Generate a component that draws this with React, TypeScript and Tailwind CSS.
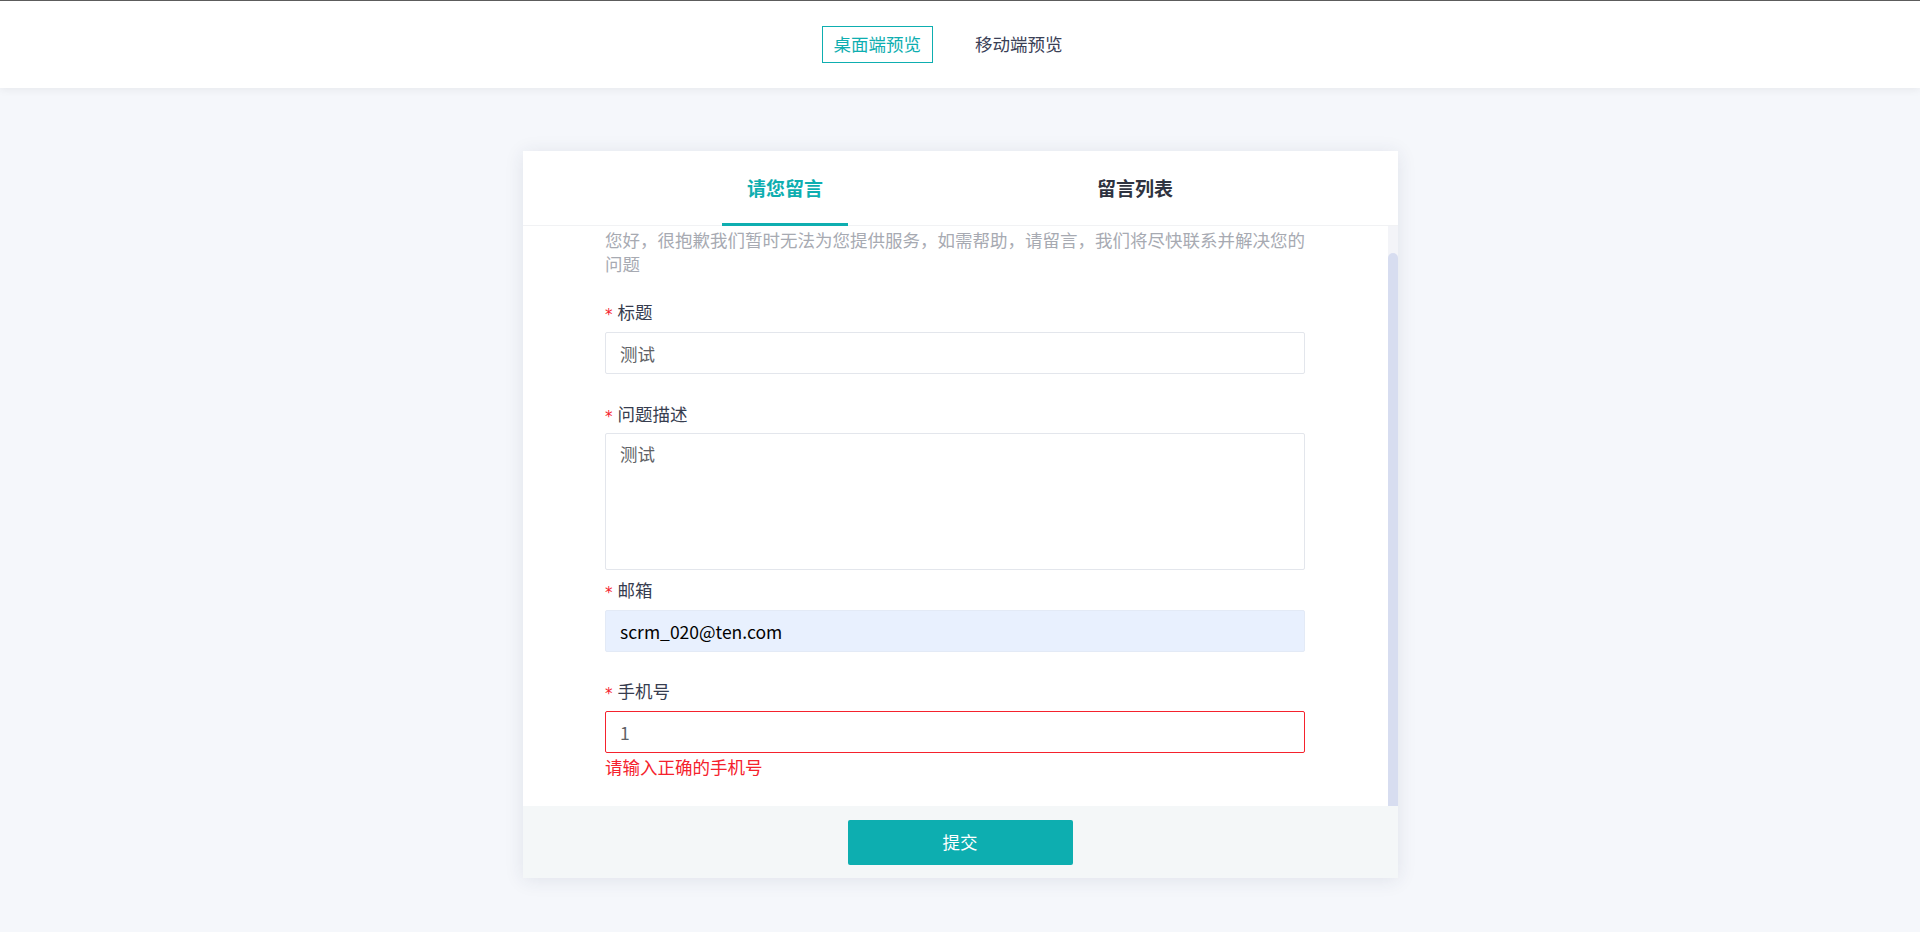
import { useState } from "react";

const fields = [
  { key: "title", label: "标题", value: "测试" },
  { key: "email", label: "邮箱", value: "scrm_020@ten.com" },
  { key: "phone", label: "手机号", value: "1" },
];

function Label({ text }: { text: string }) {
  return (
    <div className="flex items-center h-[24px] text-[17.5px] leading-[24px] text-[#373d4f]">
      <span className="text-[#f5222d] text-[15px] mr-[5px] leading-none translate-y-[3px] font-['DejaVu_Sans',sans-serif]">*</span>
      {text}
    </div>
  );
}

export default function App() {
  const [mode, setMode] = useState("desktop");
  const [tab, setTab] = useState(0);

  return (
    <div className="min-h-screen bg-[#f5f7fb] font-['Noto_Sans_CJK_SC','Noto_Sans',sans-serif]">
      {/* 顶部预览切换 */}
      <header className="h-[88px] bg-white border-t border-[#5c5c5c] shadow-[0_2px_8px_rgba(0,0,0,0.06)] flex items-center justify-center">
        <div className="flex items-center gap-[30px] mr-[24px]">
          <button
            onClick={() => setMode("desktop")}
            className={`h-[37px] px-[11px] text-[17.5px] border ${
              mode === "desktop" ? "border-[#0eaeb0] text-[#0eaeb0]" : "border-transparent text-[#3a4056]"
            }`}
          >
            桌面端预览
          </button>
          <button
            onClick={() => setMode("mobile")}
            className={`h-[37px] px-[11px] text-[17.5px] border ${
              mode === "mobile" ? "border-[#0eaeb0] text-[#0eaeb0]" : "border-transparent text-[#3a4056]"
            }`}
          >
            移动端预览
          </button>
        </div>
      </header>

      <main className="flex justify-center pt-[63px] pb-[54px]">
        <div className="w-[875px] bg-white shadow-[0_2px_18px_rgba(40,50,90,0.10)] flex flex-col">
          {/* tabs */}
          <div className="h-[75px] border-b border-[#f1f2f4]">
            <div className="w-[700px] mx-auto h-full grid grid-cols-2">
              {["请您留言", "留言列表"].map((t, i) => (
                <div key={t} className="flex justify-center">
                  <button
                    onClick={() => setTab(i)}
                    className={`relative h-full px-[25px] text-[19px] font-bold ${
                      tab === i ? "text-[#0eaeb0]" : "text-[#2f3340]"
                    }`}
                  >
                    {t}
                    {tab === i && <span className="absolute left-0 right-0 -bottom-[1px] h-[3px] bg-[#0eaeb0]" />}
                  </button>
                </div>
              ))}
            </div>
          </div>

          {/* form body */}
          <div className="flex h-[580px]">
            <div className="flex-1 overflow-hidden">
              <div className="w-[700px] mx-auto pt-[2px]">
                <p className="text-[17.5px] leading-[24px] text-[#a7aab2] mb-[24px]">
                  您好，很抱歉我们暂时无法为您提供服务，如需帮助，请留言，我们将尽快联系并解决您的问题
                </p>

                <Label text={fields[0].label} />
                <input
                  readOnly
                  value={fields[0].value}
                  className="mt-[8px] mb-[28px] w-full h-[42px] px-[14px] border border-[#e3e6ec] rounded-[2px] text-[17.5px] text-[#606266] outline-none"
                />

                <Label text="问题描述" />
                <textarea
                  readOnly
                  value="测试"
                  className="block mt-[7px] mb-[8px] w-full h-[137px] px-[14px] py-[8px] border border-[#e3e6ec] rounded-[2px] text-[17.5px] leading-[24px] text-[#606266] outline-none resize-none"
                />

                <Label text={fields[1].label} />
                <input
                  readOnly
                  value={fields[1].value}
                  className="mt-[8px] mb-[27px] w-full h-[42px] px-[14px] bg-[#e8f0fe] border border-[#e3eaf6] rounded-[2px] text-[17.5px] text-black outline-none"
                />

                <Label text={fields[2].label} />
                <input
                  readOnly
                  value={fields[2].value}
                  className="mt-[8px] w-full h-[42px] px-[14px] border border-[#f5222d] rounded-[2px] text-[17.5px] text-[#606266] outline-none"
                />
                <div className="mt-[2px] text-[17.5px] leading-[24px] text-[#f5222d]">请输入正确的手机号</div>
              </div>
            </div>
            {/* scrollbar */}
            <div className="w-[10px] bg-[#f3f4f8] flex flex-col">
              <div className="mt-[27px] flex-1 bg-[#d7ddf0] rounded-t-[5px]" />
            </div>
          </div>

          {/* footer */}
          <div className="h-[72px] bg-[#f4f7f8] flex items-center justify-center">
            <button className="w-[225px] h-[45px] bg-[#0daeb0] text-white text-[17.5px] rounded-[2px]">提交</button>
          </div>
        </div>
      </main>
    </div>
  );
}
